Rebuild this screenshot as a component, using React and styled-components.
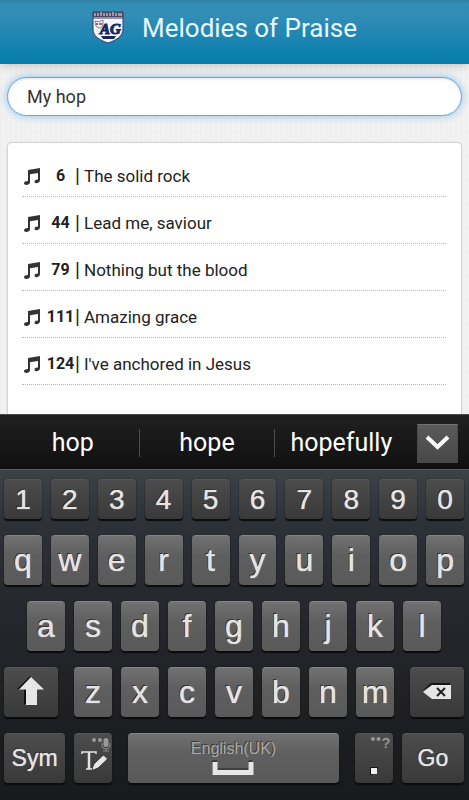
import React, { useState } from 'react';
import styled, { createGlobalStyle, css } from 'styled-components';

const GlobalStyle = createGlobalStyle`
  *, *::before, *::after { box-sizing: border-box; }
  body {
    margin: 0;
    background: #f2f2f2;
    font-family: Roboto, 'Open Sans', sans-serif;
    color: #333;
  }
  button, input { font: inherit; color: inherit; }
`;

const Page = styled.div`
  display: flex;
  flex-direction: column;
  height: 100vh;
  overflow: hidden;
  background:
    repeating-linear-gradient(0deg, rgba(0, 0, 0, 0.012) 0 1px, transparent 1px 3px),
    repeating-linear-gradient(90deg, rgba(0, 0, 0, 0.012) 0 2px, transparent 2px 5px),
    #f3f3f3;
`;

const Header = styled.header`
  display: flex;
  flex: none;
  align-items: center;
  justify-content: center;
  gap: 18px;
  height: 64px;
  padding: 0 20px 8px 0;
  background: linear-gradient(#2f7f9f 0, #338eb7 4px, #318db6 16px, #067cad 100%);
  border-bottom: 1px solid #2a7192;
  box-shadow: 0 1px 10px rgba(0, 0, 0, 0.22);
`;

const Title = styled.h1`
  margin: 0;
  font-size: 26px;
  line-height: 32px;
  font-weight: 400;
  color: #e9f7ff;
  white-space: nowrap;
`;

const Content = styled.main`
  display: flex;
  flex: 1;
  flex-direction: column;
  gap: 26px;
  min-height: 0;
  padding: 13px 7px 0;
`;

const SearchInput = styled.input`
  flex: none;
  width: 100%;
  height: 39px;
  padding: 0 19px;
  font-size: 18px;
  color: #333;
  background: #fff;
  border: 1px solid #62aae6;
  border-radius: 20px;
  outline: none;
  box-shadow: inset 0 1px 3px rgba(0, 0, 0, 0.12), 0 0 9px #8cc0ea;
`;

const SongList = styled.ul`
  flex: 1;
  min-height: 0;
  margin: 0;
  padding: 7px 15px 0 14px;
  list-style: none;
  background: #fff;
  border: 1px solid #d4d4d4;
  border-bottom: 0;
  border-radius: 5px 5px 0 0;
  box-shadow: 0 0 2px rgba(0, 0, 0, 0.1);
`;

const SongItem = styled.li`
  border-bottom: 1px dotted #b5b5b5;
`;

const SongLink = styled.a`
  display: flex;
  align-items: center;
  height: 46px;
  padding: 6px 0 0 2px;
  font-size: 17px;
  line-height: 20px;
  color: #222;
  text-decoration: none;
`;

const SongNumber = styled.b`
  width: 29px;
  margin-left: 5px;
  font-size: 16px;
  line-height: 22px;
  font-weight: 700;
  text-align: center;
`;

const Divider = styled.span`
  width: 5px;
  font-size: 20px;
  text-align: center;
`;

const SongTitle = styled.span`
  padding-left: 4px;
  white-space: nowrap;
`;

const SuggestionBar = styled.div`
  display: flex;
  flex: none;
  align-items: center;
  height: 55px;
  padding: 2px 11px 0 5px;
  background: linear-gradient(#202020, #101010);
  border-top: 1px solid #484848;
`;

const Suggestion = styled.button`
  flex: 1;
  height: 28px;
  padding: 0;
  font-size: 25px;
  line-height: 28px;
  color: #fff;
  background: none;
  border: 0;
  border-left: 1px solid ${(p) => (p.$first ? 'transparent' : '#4c4c4c')};
`;

const CollapseButton = styled.button`
  display: grid;
  place-items: center;
  flex: none;
  width: 41px;
  height: 39px;
  margin-left: 9px;
  padding: 0;
  background: linear-gradient(#5a5a5a, #484848);
  border: 1px solid #4a4a4a;
  border-top-color: #717171;
`;

const Keyboard = styled.section`
  display: flex;
  flex: none;
  flex-direction: column;
  gap: 16px;
  padding: 9px 5px 17px 4px;
  background: linear-gradient(#3d4249 0, #2e3239 48px, #26292e 120px, #1b1c1f 280px, #191a1c 100%);
  border-top: 1px solid #555d63;
`;

const KeyRow = styled.div`
  display: grid;
  grid-template-columns: ${(p) => p.$columns};
  gap: ${(p) => p.$gap || 9}px;
  padding: 0 ${(p) => p.$inset || 0}px;
`;

const darkKey = css`
  background: linear-gradient(#4c4c4c, #393939);
  border-top-color: #575757;
`;

const lightKey = css`
  background: linear-gradient(#717171, #5f5f5f 40%, #595959);
  border-top-color: #858585;
`;

const Key = styled.button`
  position: relative;
  display: flex;
  flex-direction: column;
  align-items: center;
  justify-content: center;
  min-width: 0;
  height: ${(p) => (p.$short ? 40 : 50)}px;
  padding: 0 0 ${(p) => (p.$short ? 0 : 1)}px;
  border: 0;
  border-top: 1px solid;
  border-radius: 4px;
  font-family: 'Liberation Sans', Arial, sans-serif;
  font-size: ${(p) => p.$size || 32}px;
  line-height: 36px;
  color: #e4e4e4;
  text-shadow: 0 0 1px #e4e4e4, -1px -1px 0 #222;
  box-shadow: 0 2px 1px #0b0b0c, 0 0 1px #111;
  ${(p) => (p.$dark ? darkKey : lightKey)}
`;

const SpaceLabel = styled.span`
  font-size: 16px;
  line-height: 20px;
  color: #a9a9a9;
  text-shadow: -1px -1px 0 #3a3a3a;
`;

const KeyHint = styled.span`
  position: absolute;
  top: 2px;
  right: 3px;
  display: flex;
  align-items: flex-start;
  gap: 1px;
  font-size: 14px;
  line-height: 14px;
  color: #999;
  text-shadow: 0 0 1px #999;
`;

function Crest() {
  return (
    <svg width="32" height="33" viewBox="0 0 32 33" role="img" aria-label="AG crest">
      <path d="M1 1h30v17c0 7-6 11-15 14C7 29 1 25 1 18Z" fill="#f4f6fa" stroke="#3a3b61" strokeWidth="1" />
      <path d="M1 1h30v5H1Z" fill="#4c4661" />
      <path d="M3 2v3M6 2v3M8 2h2M8 4h2M12 2v3M15 2v3M18 2v3M20 2h2M20 4h2M24 2v3M27 2v3M29 2v3" stroke="#eceaf2" strokeWidth="1" />
      <path d="M1 7h30" stroke="#283563" strokeWidth="1" />
      <path d="M3 10q4 2 8-1v5q-1 4-4 3-4-1-4-7Z" fill="#f9eeee" stroke="#827b93" strokeWidth="1" />
      <path d="M4 13h2M7 13h3" stroke="#8b6d83" strokeWidth="2" />
      <text x="8" y="23" fontFamily="Liberation Serif, serif" fontSize="15" fontStyle="italic" fontWeight="700" fill="#17285f" stroke="#17285f">
        AG
      </text>
      <path d="M9 25h15l-2 3H11Z" fill="#17285f" />
    </svg>
  );
}

function MusicNote() {
  return (
    <svg width="17" height="17" viewBox="0 0 17 17" aria-hidden="true">
      <path d="M4 2 16 0v12.300c0 3-5.500 4-5.500 1.500 0-1.800 2-2.500 3.500-2.300V5L6 6.300v8c0 3-6 3.500-6 1 0-1.800 2.500-2.500 4-2.300Z" fill="#333" />
    </svg>
  );
}

function Chevron() {
  return (
    <svg width="25" height="16" viewBox="0 0 25 16" aria-hidden="true">
      <path d="m2 2 10.500 10L23 2" fill="none" stroke="#fff" strokeWidth="4" />
    </svg>
  );
}

function ShiftArrow() {
  return (
    <svg width="28" height="32" viewBox="0 0 28 32" aria-hidden="true">
      <path d="M13 0 0 13h7v15h11V13h1Z" fill="#111" />
      <path d="M14 1 27 13.500h-7V29H9V13.500H2Z" fill="#e6e6e6" />
    </svg>
  );
}

function BackspaceIcon() {
  return (
    <svg width="30" height="18" viewBox="0 0 30 18" aria-hidden="true">
      <path d="M0 8 9 0h19v2H10Z" fill="#151515" />
      <path d="m1 9 9-7h19v14H10Z" fill="#e6e6e6" />
      <path d="m15 5 8 8m0-8-8 8" stroke="#222" strokeWidth="2" />
    </svg>
  );
}

function PenInputIcon() {
  return (
    <svg width="38" height="46" viewBox="0 0 38 46" aria-hidden="true">
      <g fill="#999">
        <circle cx="20" cy="5" r="2" />
        <circle cx="26" cy="5" r="2" />
        <rect x="29.500" y="3" width="5" height="9" rx="2.500" />
      </g>
      <path d="M28 8v2q0 4 4 4t4-4V8M32 14v2m-3 0h6" fill="none" stroke="#888" />
      <path d="M8 19v-2h14v2M12 34h6" fill="none" stroke="#e4e4e4" strokeWidth="1.500" />
      <path d="M15 17v17" stroke="#e4e4e4" strokeWidth="2.500" />
      <path d="m19 34 2-5 8.500-8 3 3-8.500 8Z" fill="#e8e8e8" stroke="#e8e8e8" strokeWidth="1" strokeLinejoin="round" />
    </svg>
  );
}

function SpaceMark() {
  return (
    <svg width="42" height="18" viewBox="0 0 42 18" aria-hidden="true">
      <path d="M0 16V2h5M37 10V2h3M5 10h32" fill="none" stroke="#222" strokeWidth="1" />
      <path d="M3 3v10.500h36V3" fill="none" stroke="#e6e6e6" strokeWidth="5" />
    </svg>
  );
}

function FullStop() {
  return (
    <svg width="8" height="36" viewBox="0 0 8 36" aria-hidden="true">
      <path d="M0 27h8v2H2v6H0Z" fill="#151515" />
      <path d="M1 28h6v6H1Z" fill="#ececec" />
    </svg>
  );
}

function HintDots() {
  return (
    <svg width="11" height="6" viewBox="0 0 11 6" aria-hidden="true">
      <circle cx="3" cy="3" r="2" fill="#999" />
      <circle cx="8.500" cy="3" r="2" fill="#999" />
    </svg>
  );
}

const songs = [
  { number: 6, title: 'The solid rock' },
  { number: 44, title: 'Lead me, saviour' },
  { number: 79, title: 'Nothing but the blood' },
  { number: 111, title: 'Amazing grace' },
  { number: 124, title: "I've anchored in Jesus" },
];

const suggestions = ['hop', 'hope', 'hopefully'];

function LetterKeys({ letters }) {
  return [...letters].map((letter) => <Key key={letter}>{letter}</Key>);
}

export default function App() {
  const [query, setQuery] = useState('My hop');

  return (
    <Page>
      <GlobalStyle />
      <Header>
        <Crest />
        <Title>Melodies of Praise</Title>
      </Header>
      <Content>
        <SearchInput
          type="text"
          aria-label="Search songs"
          value={query}
          onChange={(event) => setQuery(event.target.value)}
        />
        <SongList>
          {songs.map((song) => (
            <SongItem key={song.number}>
              <SongLink href={`#song-${song.number}`}>
                <MusicNote />
                <SongNumber>{song.number}</SongNumber>
                <Divider>|</Divider>
                <SongTitle>{song.title}</SongTitle>
              </SongLink>
            </SongItem>
          ))}
        </SongList>
      </Content>
      <SuggestionBar>
        {suggestions.map((word, index) => (
          <Suggestion key={word} $first={index === 0}>{word}</Suggestion>
        ))}
        <CollapseButton aria-label="More suggestions"><Chevron /></CollapseButton>
      </SuggestionBar>
      <Keyboard aria-label="Keyboard">
        <KeyRow $columns="repeat(10, minmax(0, 1fr))">
          {[...'1234567890'].map((digit) => (
            <Key key={digit} $dark $short $size={28}>{digit}</Key>
          ))}
        </KeyRow>
        <KeyRow $columns="repeat(10, minmax(0, 1fr))">
          <LetterKeys letters="qwertyuiop" />
        </KeyRow>
        <KeyRow $columns="repeat(9, minmax(0, 1fr))" $inset={23}>
          <LetterKeys letters="asdfghjkl" />
        </KeyRow>
        <KeyRow $columns="54fr 320fr 54fr" $gap={16}>
          <Key $dark aria-label="Shift"><ShiftArrow /></Key>
          <KeyRow $columns="repeat(7, minmax(0, 1fr))">
            <LetterKeys letters="zxcvbnm" />
          </KeyRow>
          <Key $dark aria-label="Backspace"><BackspaceIcon /></Key>
        </KeyRow>
        <KeyRow $columns="108fr 210fr 109fr" $gap={16}>
          <KeyRow $columns="61fr 38fr">
            <Key $dark $size={23}>Sym</Key>
            <Key $dark aria-label="Handwriting input"><PenInputIcon /></Key>
          </KeyRow>
          <Key aria-label="Space, English(UK)">
            <SpaceLabel>English(UK)</SpaceLabel>
            <SpaceMark />
          </Key>
          <KeyRow $columns="38fr 62fr">
            <Key $dark aria-label="Full stop">
              <KeyHint><HintDots />?</KeyHint>
              <FullStop />
            </Key>
            <Key $dark $size={23}>Go</Key>
          </KeyRow>
        </KeyRow>
      </Keyboard>
    </Page>
  );
}
